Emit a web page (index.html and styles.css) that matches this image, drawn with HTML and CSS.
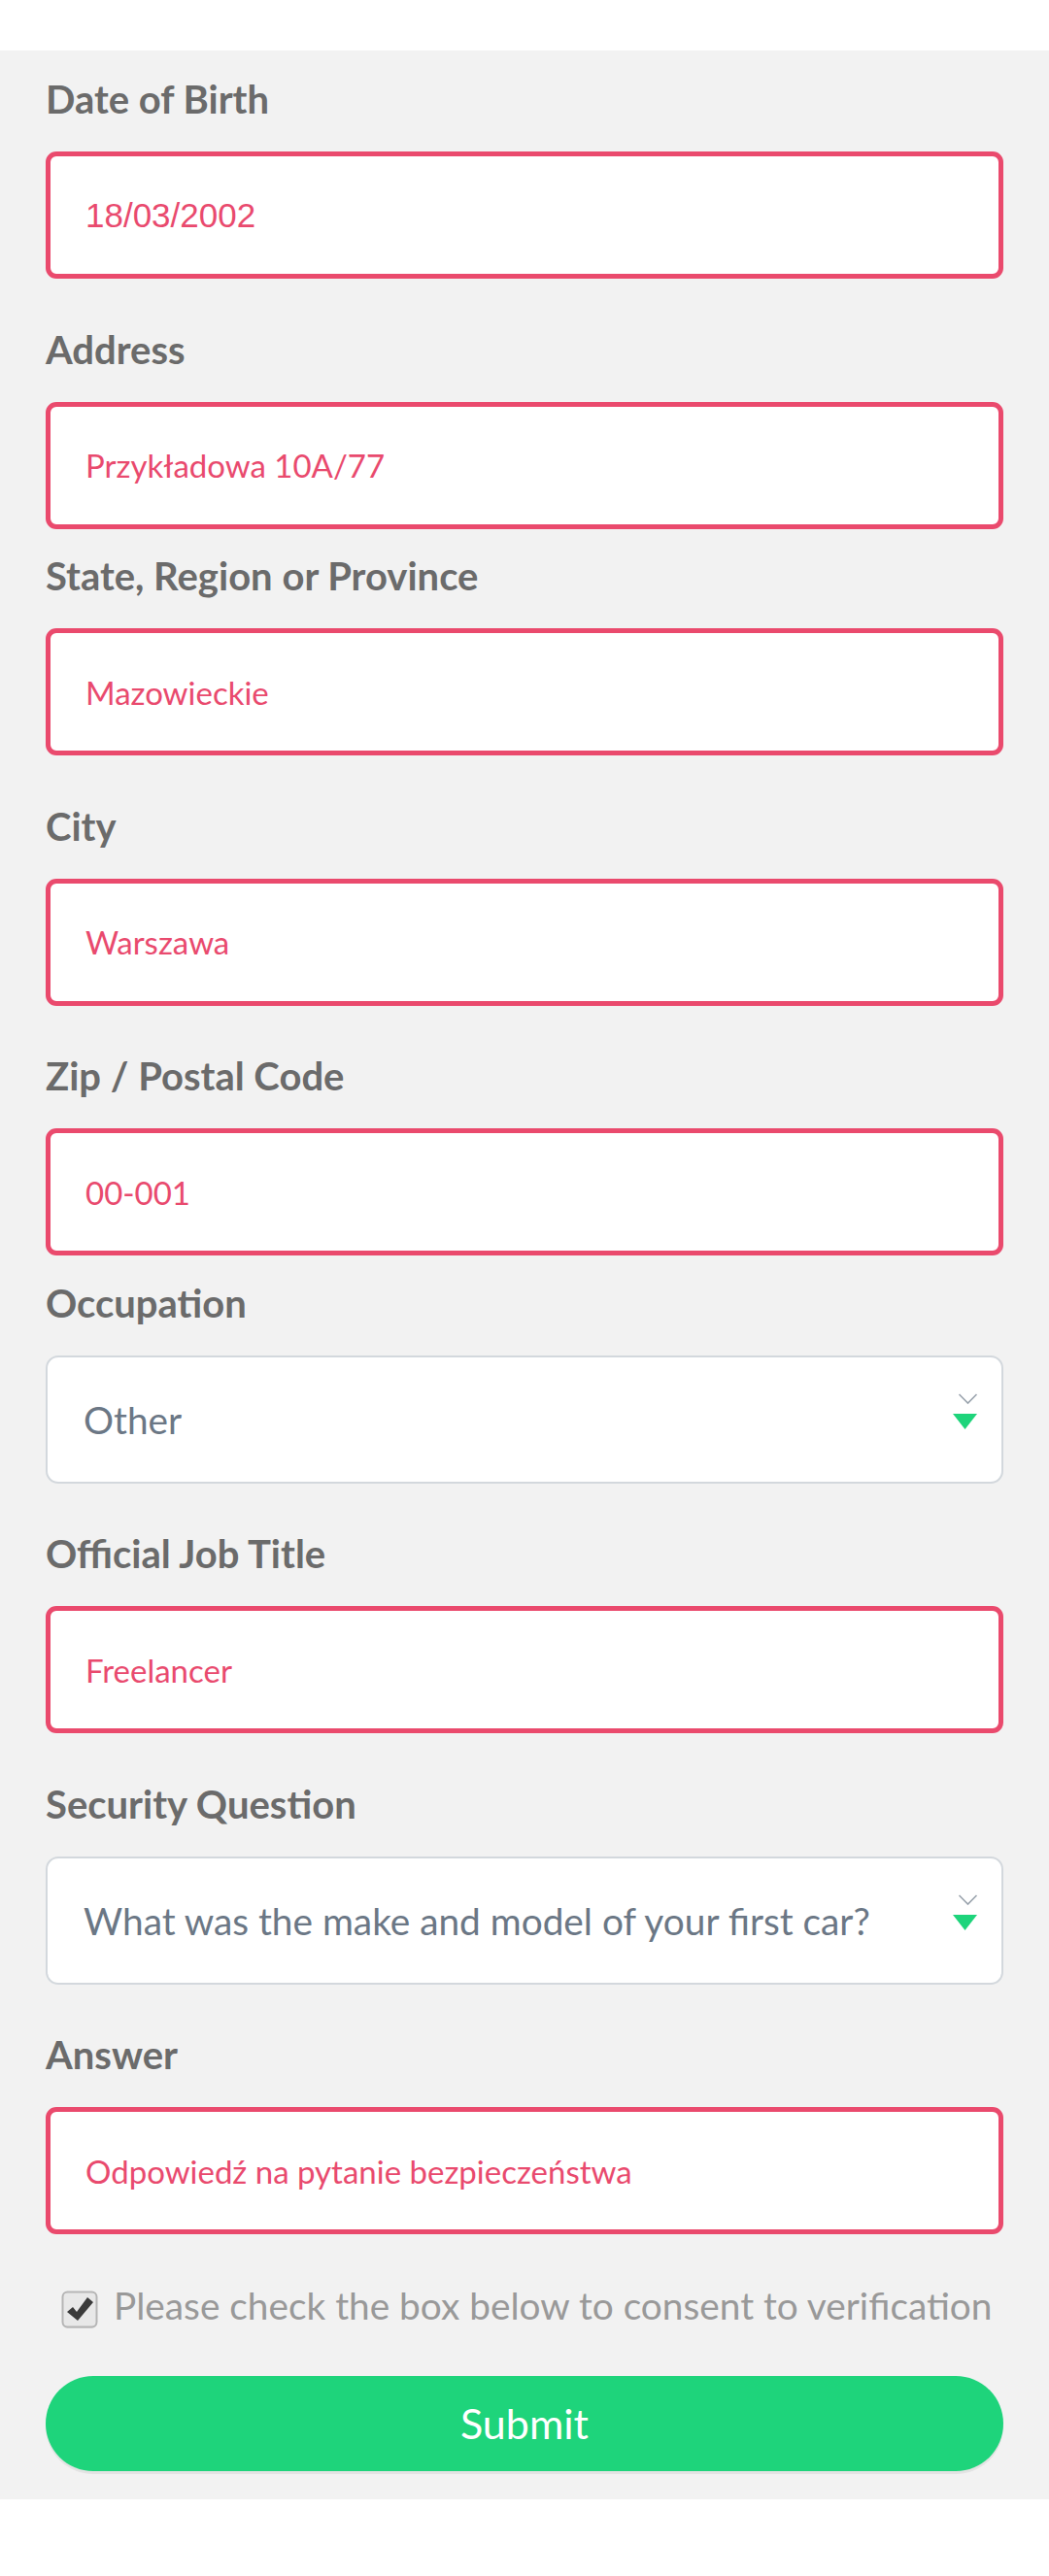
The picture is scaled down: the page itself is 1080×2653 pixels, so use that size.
FILE: index.html
```html
<!DOCTYPE html>
<html lang="en">
<head>
<meta charset="utf-8">
<title>Form</title>
<link rel="stylesheet" href="styles.css">
</head>
<body>
<div class="topbar"></div>
<form class="form">
  <div class="field">
    <div class="label">Date of Birth</div>
    <div class="input input--date">18/03/2002</div>
  </div>
  <div class="field field--tight">
    <div class="label">Address</div>
    <div class="input">Przykładowa 10A/77</div>
  </div>
  <div class="field">
    <div class="label">State, Region or Province</div>
    <div class="input">Mazowieckie</div>
  </div>
  <div class="field">
    <div class="label">City</div>
    <div class="input">Warszawa</div>
  </div>
  <div class="field field--tight">
    <div class="label">Zip / Postal Code</div>
    <div class="input">00-001</div>
  </div>
  <div class="field">
    <div class="label">Occupation</div>
    <div class="select">Other
      <svg class="select-arrows" width="26" height="38" viewBox="0 0 26 38"><polyline points="6.5,1 15.5,10 24.5,1" fill="none" stroke="#9aa3ad" stroke-width="1.6"/><polygon points="0,21 25,21 12.5,37" fill="#1ed47b"/></svg>
    </div>
  </div>
  <div class="field">
    <div class="label">Official Job Title</div>
    <div class="input">Freelancer</div>
  </div>
  <div class="field">
    <div class="label">Security Question</div>
    <div class="select">What was the make and model of your first car?
      <svg class="select-arrows" width="26" height="38" viewBox="0 0 26 38"><polyline points="6.5,1 15.5,10 24.5,1" fill="none" stroke="#9aa3ad" stroke-width="1.6"/><polygon points="0,21 25,21 12.5,37" fill="#1ed47b"/></svg>
    </div>
  </div>
  <div class="field">
    <div class="label">Answer</div>
    <div class="input">Odpowiedź na pytanie bezpieczeństwa</div>
  </div>
  <label class="consent">
    <svg class="checkbox" width="38" height="40" viewBox="0 0 38 40">
      <rect x="1.5" y="3" width="35" height="36" rx="5" fill="#dcdcdc"/>
      <rect x="1.5" y="1.5" width="35" height="36" rx="5" fill="#e8e8e8" stroke="#b5b5b5" stroke-width="2"/>
      <path d="M6 22 L12 17 L16 22 L27 7 L33 12 L17 31 Z" fill="#3a3a3a"/>
    </svg>
    <span>Please check the box below to consent to verification</span>
  </label>
  <div class="submit">Submit</div>
</form>
</body>
</html>
```
FILE: styles.css
```css
body {
  margin: 0;
  background: #ffffff;
  font-family: Lato, "Noto Sans", sans-serif;
}

.topbar {
  height: 52px;
}

.form {
  display: block;
  background: #f2f2f2;
  padding: 26px 47px 29px;
}

.field {
  margin-bottom: 48.5px;
}

.field--tight {
  margin-bottom: 24.5px;
}

.label {
  font-weight: 700;
  font-size: 40px;
  line-height: 48px;
  color: #6b6b6b;
  margin-bottom: 30px;
}

.input {
  box-sizing: border-box;
  height: 131px;
  border: 5px solid #ea4a6d;
  border-radius: 11px;
  background: #ffffff;
  display: flex;
  align-items: center;
  padding-left: 36px;
  font-size: 33px;
  color: #e94a6e;
  white-space: nowrap;
}

.input--date {
  font-family: "Liberation Sans", Arial, sans-serif;
  font-size: 35px;
}

.select {
  position: relative;
  box-sizing: border-box;
  height: 132px;
  border: 2px solid #d3d8dd;
  border-radius: 13px;
  background: #ffffff;
  display: flex;
  align-items: center;
  padding-left: 37px;
  font-size: 38.8px;
  color: #6b7785;
  white-space: nowrap;
}

.select-arrows {
  position: absolute;
  right: 24px;
  top: 37px;
}

.consent {
  display: flex;
  align-items: flex-start;
  height: 48px;
  margin-top: 2px;
  padding-left: 16px;
  font-size: 38.8px;
  line-height: 48px;
  color: #999999;
  white-space: nowrap;
}

.checkbox {
  flex: none;
  margin-top: 9px;
  margin-right: 16px;
}

.submit {
  margin-top: 49px;
  height: 98px;
  border-radius: 49px;
  background: #1ed47b;
  box-shadow: 0 3px 0 #e3e3e3;
  color: #ffffff;
  font-size: 43px;
  display: flex;
  align-items: center;
  justify-content: center;
}
```
